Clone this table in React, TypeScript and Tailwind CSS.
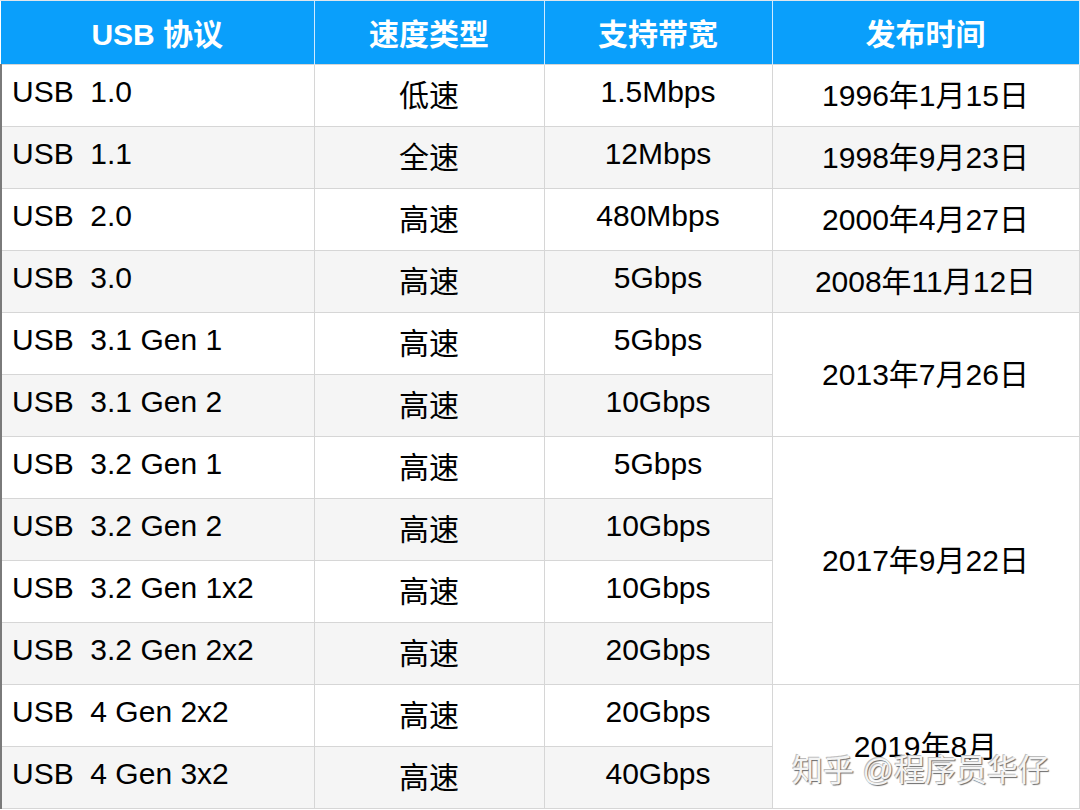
const rows: { name: string; speed: string; bw: string; date?: string; span?: number }[] = [
  { name: "USB  1.0", speed: "低速", bw: "1.5Mbps", date: "1996年1月15日" },
  { name: "USB  1.1", speed: "全速", bw: "12Mbps", date: "1998年9月23日" },
  { name: "USB  2.0", speed: "高速", bw: "480Mbps", date: "2000年4月27日" },
  { name: "USB  3.0", speed: "高速", bw: "5Gbps", date: "2008年11月12日" },
  { name: "USB  3.1 Gen 1", speed: "高速", bw: "5Gbps", date: "2013年7月26日", span: 2 },
  { name: "USB  3.1 Gen 2", speed: "高速", bw: "10Gbps" },
  { name: "USB  3.2 Gen 1", speed: "高速", bw: "5Gbps", date: "2017年9月22日", span: 4 },
  { name: "USB  3.2 Gen 2", speed: "高速", bw: "10Gbps" },
  { name: "USB  3.2 Gen 1x2", speed: "高速", bw: "10Gbps" },
  { name: "USB  3.2 Gen 2x2", speed: "高速", bw: "20Gbps" },
  { name: "USB  4 Gen 2x2", speed: "高速", bw: "20Gbps", date: "2019年8月", span: 2 },
  { name: "USB  4 Gen 3x2", speed: "高速", bw: "40Gbps" },
];

const headers = ["USB 协议", "速度类型", "支持带宽", "发布时间"];

export default function App() {
  return (
    <div className="relative h-[810px] w-[1080px] overflow-hidden bg-white font-['Liberation_Sans','Noto_Sans_CJK_SC',sans-serif] text-[30px] text-black">
      <div className="h-px bg-[#dfe6ec]" />
      <table className="w-[1078px] table-fixed border-collapse">
        <colgroup>
          <col className="w-[313px]" />
          <col className="w-[230px]" />
          <col className="w-[228px]" />
          <col className="w-[307px]" />
        </colgroup>
        <thead>
          <tr className="h-[63px] bg-[#0a9ffb] border-b border-b-[#8a9aa6]">
            {headers.map((h) => (
              <th
                key={h}
                className="border-x border-x-[#cfeaff] pt-1 text-center align-middle text-[30px] font-bold text-white first:border-l-0"
              >
                {h}
              </th>
            ))}
          </tr>
        </thead>
        <tbody className="border-l-2 border-l-[#7a7a7a]">
          {rows.map((r, i) => {
            const bg = i % 2 === 0 ? "bg-white" : "bg-[#f5f5f5]";
            return (
              <tr key={r.name} className={`h-[62px] ${bg}`}>
                <td className="border border-l-2 border-[#d6d6d6] border-l-[#7a7a7a] pb-2 pl-[10px] align-middle whitespace-pre">
                  {r.name}
                </td>
                <td className="border border-[#d6d6d6] text-center align-middle">{r.speed}</td>
                <td className="border border-[#d6d6d6] pb-2 text-center align-middle">{r.bw}</td>
                {r.date && (
                  <td
                    rowSpan={r.span ?? 1}
                    className={`border border-[#d6d6d6] text-center align-middle ${
                      r.span ? "bg-white" : ""
                    }`}
                  >
                    {r.date}
                  </td>
                )}
              </tr>
            );
          })}
        </tbody>
      </table>

      <div className="pointer-events-none absolute left-[792px] top-[748px] text-[31px] text-[#f4f4f4] [text-shadow:1px_1px_1px_#6b6b6b,-1px_-1px_0_#bdbdbd]">
        知乎 @程序员华仔
      </div>
    </div>
  );
}
